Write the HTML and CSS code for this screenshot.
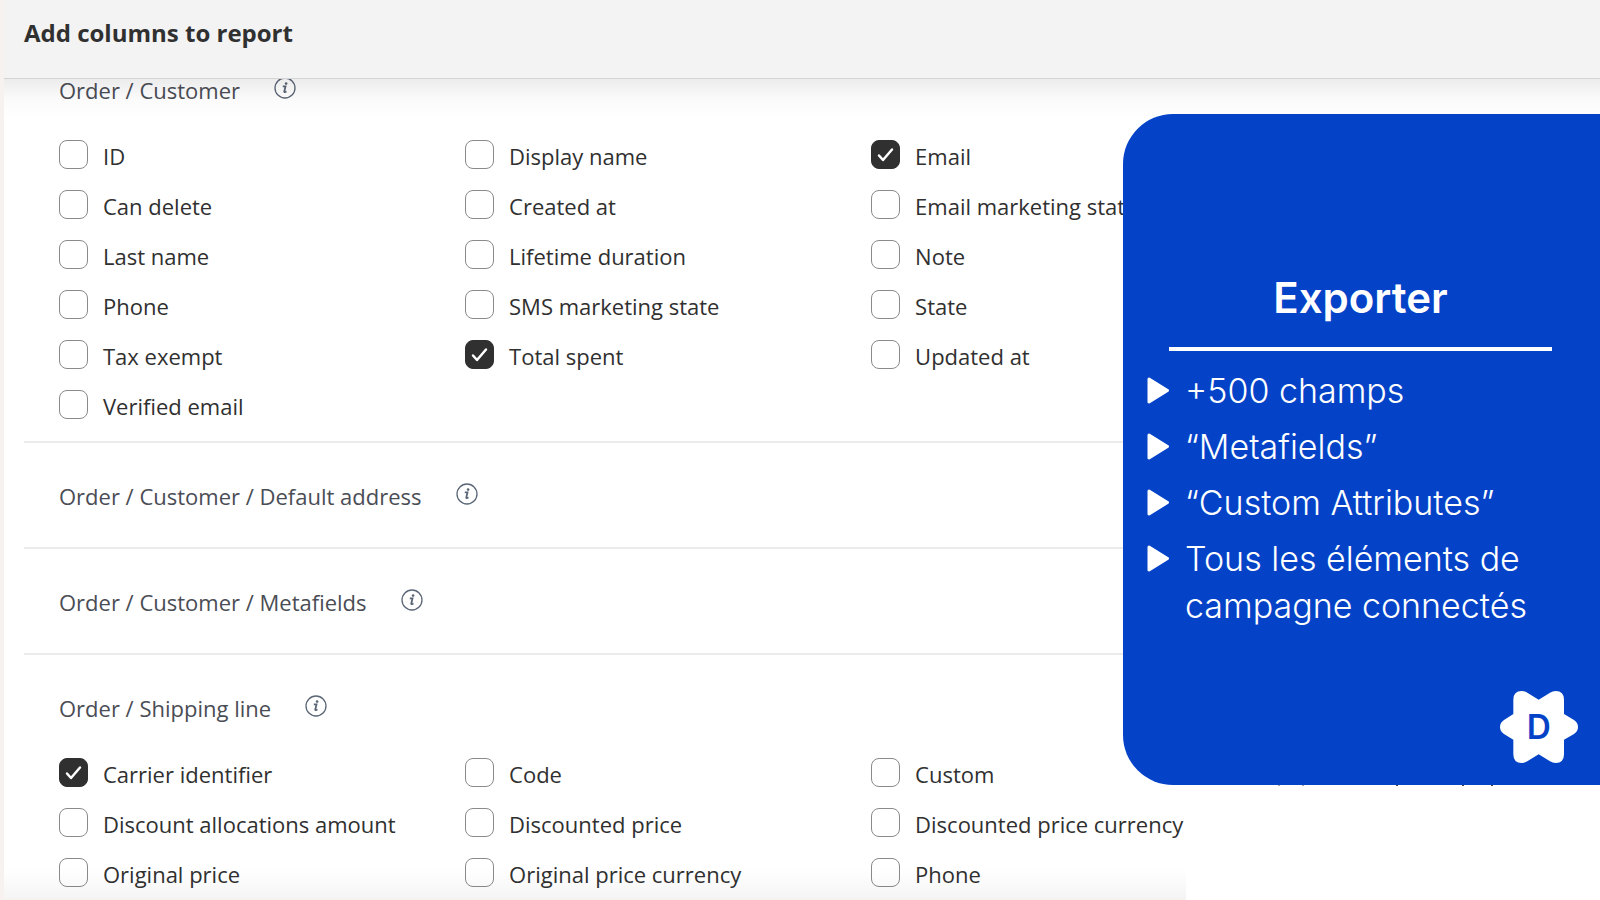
FILE: index.html
```html
<!DOCTYPE html>
<html lang="en">
<head>
<meta charset="utf-8">
<title>Add columns to report</title>
<link rel="stylesheet" href="styles.css">
</head>
<body>
<svg class="defs" aria-hidden="true">
  <symbol id="info" viewBox="0 0 22 22">
    <circle cx="11" cy="11" r="10" fill="none" stroke="currentColor" stroke-width="1.3"/>
    <path d="M8.8 9.4h2.7l-1.2 5.1q-.1.7.6.6l1.6-.6" fill="none" stroke="currentColor" stroke-width="1.8"/>
    <circle cx="12.1" cy="6.6" r="1.3" fill="currentColor"/>
  </symbol>
  <symbol id="play" viewBox="0 0 22 27">
    <path d="M2 2L20.5 13.5L2 25Z" fill="currentColor" stroke="currentColor" stroke-width="3" stroke-linejoin="round"/>
  </symbol>
</svg>
<div class="modal">
  <header class="bar"><h1 class="title">Add columns to report</h1></header>
  <main class="content">
    <section class="group">
      <h2 class="heading">Order / Customer <svg class="info"><use href="#info"/></svg></h2>
      <div class="fields">
        <label class="field"><input class="box" type="checkbox">ID</label>
        <label class="field"><input class="box" type="checkbox">Display name</label>
        <label class="field"><input class="box" type="checkbox" checked>Email</label>
        <label class="field"><input class="box" type="checkbox">Can delete</label>
        <label class="field"><input class="box" type="checkbox">Created at</label>
        <label class="field"><input class="box" type="checkbox">Email marketing state</label>
        <label class="field"><input class="box" type="checkbox">Last name</label>
        <label class="field"><input class="box" type="checkbox">Lifetime duration</label>
        <label class="field"><input class="box" type="checkbox">Note</label>
        <label class="field"><input class="box" type="checkbox">Phone</label>
        <label class="field"><input class="box" type="checkbox">SMS marketing state</label>
        <label class="field"><input class="box" type="checkbox">State</label>
        <label class="field"><input class="box" type="checkbox">Tax exempt</label>
        <label class="field"><input class="box" type="checkbox" checked>Total spent</label>
        <label class="field"><input class="box" type="checkbox">Updated at</label>
        <label class="field"><input class="box" type="checkbox">Verified email</label>
      </div>
    </section>
    <section class="group">
      <h2 class="heading">Order / Customer / Default address <svg class="info"><use href="#info"/></svg></h2>
    </section>
    <section class="group">
      <h2 class="heading">Order / Customer / Metafields <svg class="info"><use href="#info"/></svg></h2>
    </section>
    <section class="group">
      <h2 class="heading">Order / Shipping line <svg class="info"><use href="#info"/></svg></h2>
      <div class="fields">
        <label class="field"><input class="box" type="checkbox" checked>Carrier identifier</label>
        <label class="field"><input class="box" type="checkbox">Code</label>
        <label class="field"><input class="box" type="checkbox">Custom</label>
        <label class="field"><input class="box" type="checkbox">Discount allocations amount</label>
        <label class="field"><input class="box" type="checkbox">Discounted price</label>
        <label class="field"><input class="box" type="checkbox">Discounted price currency</label>
        <label class="field"><input class="box" type="checkbox">Original price</label>
        <label class="field"><input class="box" type="checkbox">Original price currency</label>
        <label class="field"><input class="box" type="checkbox">Phone</label>
      </div>
    </section>
  </main>
  <div class="fade"></div>
</div>
<aside class="card" lang="fr">
  <h2 class="card-title">Exporter</h2>
  <ul class="points">
    <li class="point"><svg class="play"><use href="#play"/></svg>+500 champs</li>
    <li class="point"><svg class="play"><use href="#play"/></svg>“Metafields”</li>
    <li class="point"><svg class="play"><use href="#play"/></svg>“Custom Attributes”</li>
    <li class="point"><svg class="play"><use href="#play"/></svg>Tous les éléments de campagne connectés</li>
  </ul>
  <svg class="logo" viewBox="0 0 234 216" role="img" aria-label="D">
    <path fill="#fff" d="M116 26L150 5Q158 0 167 0Q192 0 192 26V69L222 87Q234 95 234 108Q234 121 222 129L192 146V190Q192 216 167 216Q158 216 150 211L116 190L82 211Q74 216 65 216Q40 216 40 190V146L12 129Q0 121 0 108Q0 95 12 87L40 69V26Q40 0 65 0Q74 0 82 5Z"/>
    <text class="logo-letter" x="116" y="145" text-anchor="middle">D</text>
  </svg>
</aside>
</body>
</html>
```

FILE: styles.css
```css
* { box-sizing: border-box; }
body {
  margin: 0;
  height: 100vh;
  overflow: hidden;
  position: relative;
  background: #fff;
  color: #303030;
  font-family: "Open Sans", "Noto Sans", sans-serif;
}
.defs { position: absolute; width: 0; height: 0; }
.modal { height: 100%; border-left: 4px solid #f7f2ef; overflow: hidden; }
.bar {
  position: relative;
  z-index: 1;
  height: 79px;
  padding: 15px 20px;
  background: #f3f3f3;
  border-bottom: 1px solid #e6e6e6;
}
.bar::after {
  content: "";
  position: absolute;
  left: 0;
  right: 0;
  top: 100%;
  height: 40px;
  background: linear-gradient(rgba(0, 0, 0, .08), rgba(0, 0, 0, .02) 50%, rgba(0, 0, 0, 0));
}
.title { margin: 0; font-size: 24px; line-height: 36px; font-weight: 700; }
.content { margin: -42px 0 0 20px; }
.group { padding: 37px 0 0 35px; border-bottom: 2px solid #ebebeb; }
.heading {
  display: flex;
  align-items: center;
  gap: 34px;
  margin: 0 0 35px;
  font-size: 22px;
  line-height: 32px;
  font-weight: 400;
  color: #4a4d55;
}
.info { width: 22px; height: 22px; margin-bottom: 4px; color: #5a6676; }
.fields {
  display: grid;
  grid-template-columns: repeat(3, 26.35%);
  margin-top: -10px;
  padding-bottom: 10px;
}
.field { display: flex; align-items: center; gap: 15px; height: 50px; font-size: 22px; white-space: nowrap; }
.box {
  appearance: none;
  flex: none;
  width: 29px;
  height: 29px;
  margin: 0 0 3px;
  border: 1px solid #8a8a8a;
  border-radius: 8px;
  background: #fff;
}
.box:checked {
  border-color: #303030;
  background: #303030 url("data:image/svg+xml,%3Csvg xmlns='http://www.w3.org/2000/svg' viewBox='0 0 27 27'%3E%3Cpath d='M7 14.5l4 4.5 9-10.5' fill='none' stroke='white' stroke-width='2.5' stroke-linecap='round' stroke-linejoin='round'/%3E%3C/svg%3E") center / 27px no-repeat;
}
.fade {
  position: absolute;
  left: 4px;
  bottom: 0;
  width: 73.9%;
  height: 32px;
  border-bottom: 2px solid #f7f2ef;
  background: linear-gradient(rgba(0, 0, 0, 0), rgba(0, 0, 0, .04));
}
.card {
  position: absolute;
  z-index: 2;
  top: 114px;
  right: 0;
  width: 477px;
  height: 671px;
  padding: 156px 22px 22px 24px;
  display: flex;
  flex-direction: column;
  border-radius: 50px 0 0 50px;
  background: #0443c8;
  color: #fff;
  font-family: Inter, sans-serif;
}
/* Descender tips of the covered column, just under the card's edge */
.card::after {
  content: "";
  position: absolute;
  top: 100%;
  left: 273px;
  width: 2px;
  height: 1px;
  background: #444;
  box-shadow: 66px 0 #444, 95px 0 #444, -118px 0 #aaa, -94px 0 #aaa;
}
.card-title {
  margin: 0 26px 0 22px;
  padding-bottom: 21px;
  border-bottom: 4px solid #fff;
  font-size: 42px;
  line-height: 56px;
  font-weight: 600;
  text-align: center;
}
.points { margin: 16px 0 0; padding: 0; list-style: none; display: grid; gap: 9px; }
.point { display: flex; gap: 16px; font-size: 34px; line-height: 47px; font-weight: 300; }
.play { flex: none; width: 22px; height: 27px; margin-top: 10px; }
.logo { width: 78px; height: 72px; margin: auto 0 0 auto; }
.logo-letter { font-size: 100px; font-weight: 600; fill: #0443c8; }
```
